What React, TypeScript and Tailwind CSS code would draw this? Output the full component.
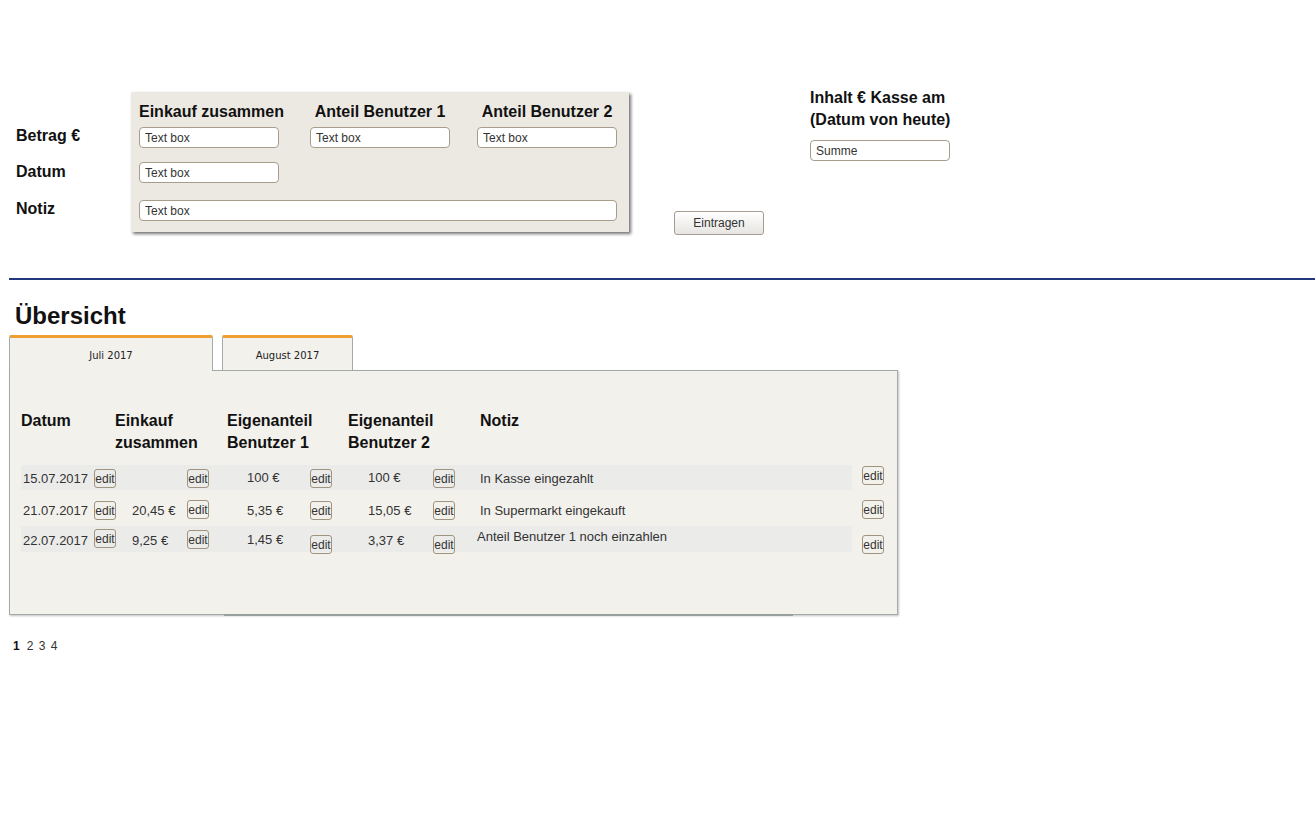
import React from 'react';

type Row = {
  date: string;
  einkauf: string;
  b1: string;
  b2: string;
  note: string;
  stripe: boolean;
  rowCls: string;
  // vertical offsets for each cell, written out as full classes
  o: string[];
};

const rows: Row[] = [
  {
    date: '15.07.2017',
    einkauf: '',
    b1: '100 €',
    b2: '100 €',
    note: 'In Kasse eingezahlt',
    stripe: true,
    rowCls: 'mt-[11px] h-[25px]',
    o: ['mt-[6px]', 'mt-[4px]', 'mt-[5px]', 'mt-[4px]', 'mt-[5px]', 'mt-[4px]', 'mt-[5px]', 'mt-[4px]', 'mt-[6px]', 'mt-[1px]'],
  },
  {
    date: '21.07.2017',
    einkauf: '20,45 €',
    b1: '5,35 €',
    b2: '15,05 €',
    note: 'In Supermarkt eingekauft',
    stripe: false,
    rowCls: 'mt-[7px] h-[25px]',
    o: ['mt-[6px]', 'mt-[4px]', 'mt-[6px]', 'mt-[3px]', 'mt-[6px]', 'mt-[4px]', 'mt-[6px]', 'mt-[4px]', 'mt-[6px]', 'mt-[3px]'],
  },
  {
    date: '22.07.2017',
    einkauf: '9,25 €',
    b1: '1,45 €',
    b2: '3,37 €',
    note: 'Anteil Benutzer 1 noch einzahlen',
    stripe: true,
    rowCls: 'mt-[4px] h-[26px]',
    o: ['mt-[7px]', 'mt-[3px]', 'mt-[7px]', 'mt-[4px]', 'mt-[6px]', 'mt-[9px]', 'mt-[7px]', 'mt-[9px]', 'mt-[3px]', 'mt-[9px]'],
  },
];

function TextBox({ value = 'Text box', className = 'w-[140px]' }: { value?: string; className?: string }) {
  return (
    <input
      readOnly
      defaultValue={value}
      className={`h-[21px] rounded-[4px] border border-[#a89d8b] bg-white px-[5px] text-[12px] text-[#333] outline-none ${className}`}
    />
  );
}

function Edit({ className = '' }: { className?: string }) {
  return (
    <button className={`h-[19px] w-[22px] shrink-0 rounded-[3px] border border-[#a09380] p-0 text-[12px] leading-none text-[#333] ${className}`}>
      edit
    </button>
  );
}

export default function App() {
  return (
    <div className="min-h-[824px] w-[1315px] bg-white font-['Liberation_Sans',Arial,sans-serif] text-[#111]">
      {/* Eingabe */}
      <div className="flex items-start pt-[86px]">
        <div className="ml-[16px] mt-[39px] w-[115px] text-[16px] font-bold leading-[22px]">
          <div>Betrag €</div>
          <div className="mt-[14px]">Datum</div>
          <div className="mt-[15px]">Notiz</div>
        </div>

        <div className="mt-[6px] h-[140px] w-[498px] bg-[#ece9e3] px-[8px] pt-[9px] shadow-[2px_2px_3px_rgba(0,0,0,0.55)]">
          <div className="flex text-[16px] font-bold leading-[22px]">
            <div className="w-[140px] whitespace-nowrap text-center">Einkauf zusammen</div>
            <div className="ml-[31px] w-[140px] whitespace-nowrap text-center">Anteil Benutzer 1</div>
            <div className="ml-[27px] w-[140px] whitespace-nowrap text-center">Anteil Benutzer 2</div>
          </div>
          <div className="mt-[4px] flex">
            <TextBox />
            <TextBox className="ml-[31px] w-[140px]" />
            <TextBox className="ml-[27px] w-[140px]" />
          </div>
          <div className="mt-[14px] flex">
            <TextBox />
          </div>
          <div className="mt-[17px] flex">
            <TextBox className="w-[478px]" />
          </div>
        </div>

        <button className="ml-[45px] mt-[125px] h-[24px] w-[90px] rounded-[3px] border border-[#a59d91] bg-gradient-to-b from-white to-[#e6e5e2] text-[12px] text-[#333]">
          Eintragen
        </button>

        <div className="ml-[46px] pt-[1px]">
          <div className="text-[16px] font-bold leading-[22px]">
            <div>Inhalt € Kasse am</div>
            <div>(Datum von heute)</div>
          </div>
          <TextBox value="Summe" className="mt-[9px] w-[140px]" />
        </div>
      </div>

      <div className="ml-[9px] mt-[43px] h-[2px] bg-[#22387a]" />

      {/* Übersicht */}
      <h1 className="ml-[15px] mt-[22px] text-[24px] font-bold leading-[28px]">Übersicht</h1>

      <div className="ml-[9px] mt-[5px] w-[889px]">
        <div className="relative z-10 flex items-end font-['DejaVu_Sans',sans-serif] text-[10px] text-[#222]">
          <div className="-mb-px flex h-[36px] w-[204px] items-center justify-center rounded-t-[2px] border-x border-t-[3px] border-x-[#a2aba8] border-t-[#f0a033] bg-[#f3f1ec] pt-[2px]">
            Juli 2017
          </div>
          <div className="ml-[9px] flex h-[35px] w-[131px] items-center justify-center rounded-t-[2px] border-x border-t-[3px] border-x-[#a2aba8] border-t-[#f0a033] bg-[#f3f1ec] pt-[2px]">
            August 2017
          </div>
        </div>

        <div className="relative h-[245px] border border-[#a2aba8] bg-[#f3f1ec] pl-[11px] pt-[39px] shadow-[1px_1px_2px_rgba(0,0,0,0.25)]">
          <div className="flex text-[16px] font-bold leading-[22px]">
            <div className="w-[94px]">Datum</div>
            <div className="w-[112px]">
              Einkauf
              <br />
              zusammen
            </div>
            <div className="w-[121px]">
              Eigenanteil
              <br />
              Benutzer 1
            </div>
            <div className="w-[132px]">
              Eigenanteil
              <br />
              Benutzer 2
            </div>
            <div>Notiz</div>
          </div>

          {rows.map((r, i) => (
            <div key={r.date} className={`flex items-start text-[13px] leading-[16px] text-[#333] ${r.rowCls}`}>
              <div className={`flex h-full w-[831px] items-start ${r.stripe ? 'bg-[#ebebea]' : ''}`}>
                <div className={`w-[73px] pl-[2px] ${r.o[0]}`}>{r.date}</div>
                <Edit className={r.o[1]} />
                <div className={`w-[71px] pl-[16px] ${r.o[2]}`}>{r.einkauf}</div>
                <Edit className={r.o[3]} />
                <div className={`w-[101px] pl-[38px] ${r.o[4]}`}>{r.b1}</div>
                <Edit className={r.o[5]} />
                <div className={`w-[101px] pl-[36px] ${r.o[6]}`}>{r.b2}</div>
                <Edit className={r.o[7]} />
                <div className={`${i === 2 ? 'pl-[22px]' : 'pl-[25px]'} ${r.o[8]}`}>{r.note}</div>
              </div>
              <Edit className={`ml-[10px] ${r.o[9]}`} />
            </div>
          ))}

          <div className="absolute -bottom-[2px] left-[214px] h-[2px] w-[569px] bg-[#98a19d]" />
        </div>
      </div>

      <div className="ml-[13px] mt-[23px] text-[12px] leading-[16px] text-[#333]">
        <span className="font-bold text-[#111]">1</span>
        <span className="ml-[7px] tracking-[1px]">2 3 4</span>
      </div>
    </div>
  );
}
